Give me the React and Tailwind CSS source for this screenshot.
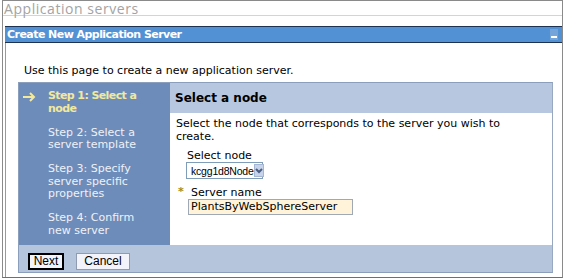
import React from 'react';

function Step({ active, lines }) {
  return (
    <div className="flex">
      <div className="w-[29px] shrink-0 pl-[4px] pt-[2px]">
        {active && (
          <svg width="13" height="10" viewBox="0 0 13 10">
            <path d="M0 5 H11 M7 1 L11 5 L7 9" stroke="#f2e99c" strokeWidth="2" fill="none" />
          </svg>
        )}
      </div>
      <div className={active ? 'text-[#f2e99c] font-bold tracking-[-0.6px]' : 'text-[#eef1f7]'}>
        {lines.map((l) => (
          <div key={l}>{l}</div>
        ))}
      </div>
    </div>
  );
}

export default function App() {
  return (
    <div className="w-[563px] h-[279px] bg-white pl-[2px] font-['DejaVu_Sans',sans-serif] text-[11px] leading-[12px] text-black">
      <div className="h-[278px] border border-[#8a8a8a] border-b-[#6f6f6f] flex flex-col">
        <div className="h-[15px] shrink-0 border-b border-[#d4d4d4] text-[#a3a3a3] font-['Open_Sans',sans-serif] text-[14px] leading-[15px] pl-[1px] tracking-[0.55px]">
          Application servers
        </div>
        <div className="ml-[2px] mt-[10px] flex-1 flex flex-col">
          <div className="h-[17px] shrink-0 bg-[#5291d3] border-y border-[#1d3252] flex items-center justify-between pl-[2px] pr-[4px]">
            <span className="text-white font-bold text-[11px] tracking-[-0.55px]">Create New Application Server</span>
            <span className="w-[8px] h-[11px] bg-[#74a4da] flex items-end justify-center pb-[2px]">
              <span className="w-[6px] h-[2px] bg-white"></span>
            </span>
          </div>
          <div className="flex-1 border-l border-[#9a9a9a] pl-[12px] pr-[9px]">
            <p className="mt-[22px] ml-[6px] mb-[5px]">Use this page to create a new application server.</p>
            <div className="border border-[#8b9fbc] border-r-[#98a8c0]">
              <div className="flex h-[162px]">
                <div className="w-[151px] bg-[#6e8cb9] pt-[7px] flex flex-col gap-[11.5px] leading-[12.5px]">
                  <Step active lines={['Step 1: Select a', 'node']} />
                  <Step lines={['Step 2: Select a', 'server template']} />
                  <Step lines={['Step 3: Specify', 'server specific', 'properties']} />
                  <Step lines={['Step 4: Confirm', 'new server']} />
                </div>
                <div className="flex-1 flex flex-col">
                  <div className="h-[30px] bg-[#b6c7df] flex items-center pl-[5px] font-bold text-[12px]">Select a node</div>
                  <div className="pl-[6px] pr-[20px] pt-[4px]">
                    <p className="leading-[13px]">Select the node that corresponds to the server you wish to create.</p>
                    <div className="ml-[10px] mt-[7px]">
                      <div className="pl-[1px]">Select node</div>
                      <div className="flex w-[77px] h-[17px] border border-[#7f9db9] bg-white items-center">
                        <span className="flex-1 pl-[4px] font-['Liberation_Sans',sans-serif] text-[10.5px] tracking-[-0.2px]">kcgg1d8Node</span>
                        <span className="w-[15px] h-[13px] mr-[1px] bg-[#c6d3ea] border border-[#a5b6d2] flex items-center justify-center">
                          <svg width="8" height="6" viewBox="0 0 8 6"><path d="M1 1 L4 4 L7 1" stroke="#4a5e84" strokeWidth="2" fill="none" /></svg>
                        </span>
                      </div>
                    </div>
                    <div className="mt-[8px] ml-[2px] flex">
                      <span className="w-[10px] text-[#a08d1c] font-bold leading-[10px]">*</span>
                      <div>
                        <div className="pl-[3px]">Server name</div>
                        <div className="w-[165px] h-[16px] border border-[#a0a8b6] bg-[#fff4da] pl-[2px] flex items-center">PlantsByWebSphereServer</div>
                      </div>
                    </div>
                  </div>
                </div>
              </div>
              <div className="h-[27px] bg-[#b5c5dc] flex items-start gap-[12px] pl-[9px] pt-[8px] font-['Liberation_Sans',sans-serif]">
                <button className="w-[36px] h-[17px] border-2 border-black bg-[#f2f3fb] text-[12px] leading-[13px]">Next</button>
                <button className="w-[54px] h-[17px] border border-[#8e9bb0] bg-[#f2f3fb] text-[12px] leading-[13px]">Cancel</button>
              </div>
            </div>
          </div>
        </div>
      </div>
    </div>
  );
}
